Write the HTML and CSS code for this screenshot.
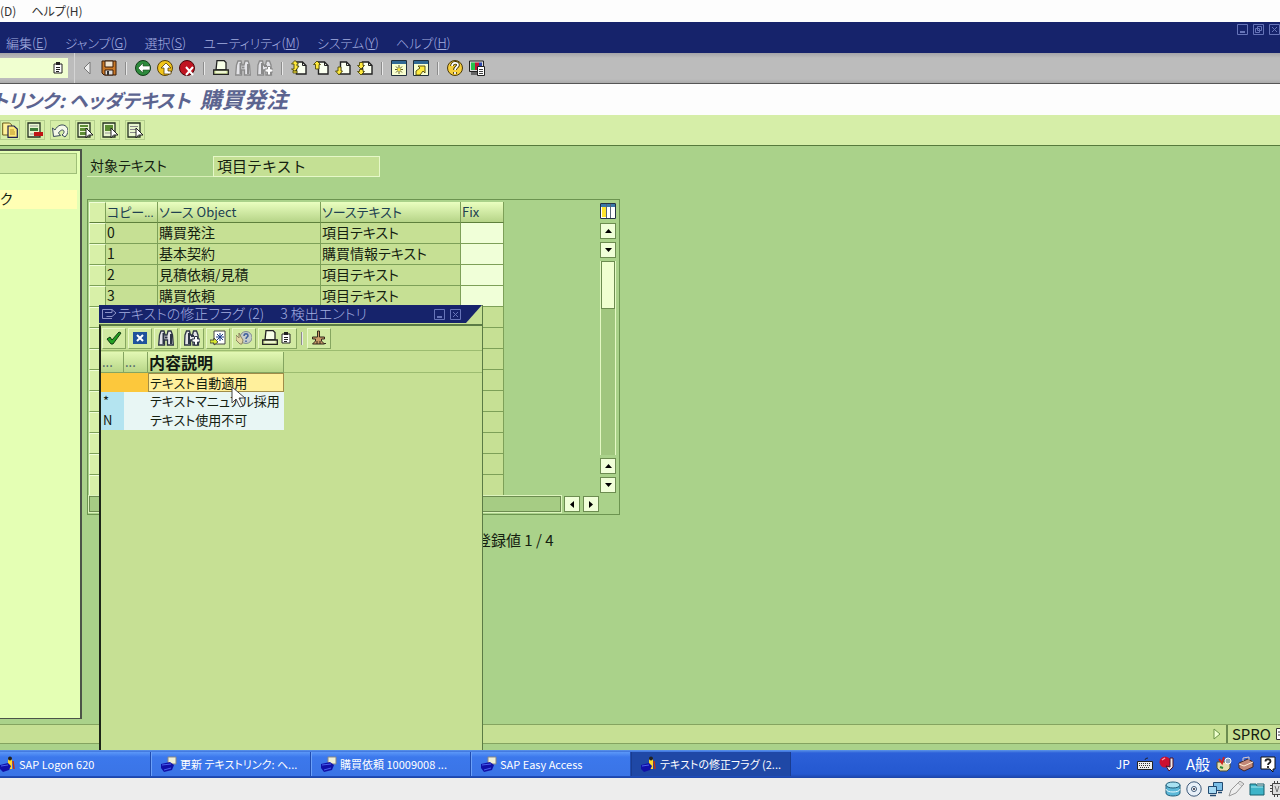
FILE: index.html
```html
<!DOCTYPE html>
<html lang="ja">
<head>
<meta charset="utf-8">
<title>テキストリンク: ヘッダテキスト 購買発注</title>
<link rel="stylesheet" href="styles.css">
</head>
<body>
<svg class="defs" width="0" height="0" aria-hidden="true">
  <symbol id="i-list" viewBox="0 0 16 16"><path d="M4 4h8v9H4z" fill="#fff" stroke="#222"/><path d="M6 2h4v3H6z" fill="#222"/><path d="M6 7.500h4M6 9.500h4M6 11.500h3" stroke="#222"/></symbol>
  <symbol id="i-tri" viewBox="0 0 8 16"><path d="M7 2L1 8l6 6z" fill="#eee" stroke="#777"/></symbol>
  <symbol id="i-save" viewBox="0 0 16 16"><path d="M1 1h14v14H3l-2-2z" fill="#c87828" stroke="#3a1c08"/><path d="M4 1h8v6H4z" fill="#f0e4d0" stroke="#3a1c08"/><path d="M4 10h8v5H4z" fill="#ddd" stroke="#3a1c08"/><path d="M6 11h2v4H6z" fill="#333"/></symbol>
  <symbol id="i-back" viewBox="0 0 16 16"><circle cx="8" cy="8" r="7.500" fill="#2d8a3c" stroke="#123d18"/><path d="M3 8l5-5v3h7v4H8v3z" fill="#fff" stroke="#1c4a20" stroke-width=".6"/></symbol>
  <symbol id="i-exit" viewBox="0 0 16 16"><circle cx="8" cy="8" r="7.500" fill="#f2c51a" stroke="#5a4308"/><path d="M9 3l5 5h-3v3h3v3H7V8H4z" fill="#fff" stroke="#5a4308" stroke-width=".8"/></symbol>
  <symbol id="i-cancel" viewBox="0 0 16 16"><circle cx="8" cy="8" r="7.500" fill="#c01420" stroke="#4a060a"/><path d="M7 7l7 8M14 7l-7 8" stroke="#fff" stroke-width="2"/></symbol>
  <symbol id="i-print" viewBox="0 0 16 16"><path d="M4 .500h7l2 2V10H3z" fill="#f8ffe8" stroke="#222" stroke-width="1.300"/><path d="M.7 10h14.600v4.300H.700z" fill="#dceca8" stroke="#222" stroke-width="1.300"/><path d="M3 12h10" stroke="#fff"/></symbol>
  <symbol id="i-find" viewBox="0 0 16 16"><path d="M1.500 5l1.500-4h3l1 4h2l1-4h3l1.500 4 .8 10H9.500v-5h-3v5H.700z" fill="#e4e4e8" stroke="currentColor" stroke-width="1.300"/><path d="M5.500 3v11M13 4v10M7 7.500h2.500" stroke="currentColor" stroke-width="2"/></symbol>
  <symbol id="i-findnext" viewBox="0 0 16 16"><path d="M1 5l1.500-4h3l1 4h2l1-4h3L14 5l.5 10H9v-5H6.500v5H.500z" fill="#e4e4e8" stroke="currentColor" stroke-width="1.300"/><path d="M5 3v11M7 6h3" stroke="currentColor" stroke-width="2"/><path d="M8 9h2.500V6.500h3V9H16v3h-2.500v3h-3v-3H8z" fill="#fff" stroke="currentColor"/></symbol>
  <symbol id="i-page" viewBox="0 0 16 16"><path d="M5.500 2h6l3.500 3.500V14H5.500z" fill="#fafff0" stroke="#222" stroke-width="1.400"/><path d="M11.500 2v3.500H15" fill="none" stroke="#222"/></symbol>
  <symbol id="i-first" viewBox="0 0 16 16"><use href="#i-page"/><path d="M.5 4L4 .500 7.500 4H6v2h2l-4 5.500L.500 9H3V4z" fill="#ffe93c" stroke="#4d4708" stroke-width=".9"/><path d="M2 11h4v2H2z" fill="#ffe93c" stroke="#4d4708" stroke-width=".8"/></symbol>
  <symbol id="i-prev" viewBox="0 0 16 16"><use href="#i-page"/><path d="M.5 4.500L4 1l3.500 3.500H6V9H2.500V4.500z" fill="#ffe93c" stroke="#4d4708" stroke-width=".9"/></symbol>
  <symbol id="i-next" viewBox="0 0 16 16"><use href="#i-page"/><path d="M3 7h3v4h1.500L4 15 .500 11H3z" fill="#ffe93c" stroke="#4d4708" stroke-width=".9"/></symbol>
  <symbol id="i-last" viewBox="0 0 16 16"><use href="#i-page"/><path d="M2.500 2.500H6v3h1.500L4 9 .500 5.500h2zM2.500 9.500H6v2h1.500L4 15 .500 11.500h2z" fill="#ffe93c" stroke="#4d4708" stroke-width=".9"/></symbol>
  <symbol id="i-session" viewBox="0 0 16 16"><path d="M.5.500h15v15H.500z" fill="#f8ffd0" stroke="#20303c"/><path d="M1 1h14v3H1z" fill="#316a94"/><path d="M8 5v9M4 9.500h8M5 6.500l6 6M11 6.500l-6 6" stroke="#4c4c10" stroke-width=".9"/><circle cx="8" cy="9.500" r="1.500" fill="#ffec40"/></symbol>
  <symbol id="i-shortcut" viewBox="0 0 16 16"><path d="M.5.500h15v15H.500z" fill="#f8ffd0" stroke="#20303c"/><path d="M1 1h14v3H1z" fill="#316a94"/><path d="M3 15v-4l4-3-2-2h7v7l-2-2-3 4z" fill="#ffec40" stroke="#4d4708" stroke-width=".9"/></symbol>
  <symbol id="i-help" viewBox="0 0 16 16"><circle cx="8" cy="8" r="7.500" fill="#f7cf3c" stroke="#4a3808"/><path d="M5 6c0-4 6-4 6-1 0 2-3 2-3 5M8 12v2" fill="none" stroke="#3b2c00" stroke-width="3.500"/><path d="M5 6c0-4 6-4 6-1 0 2-3 2-3 5M8 12v2" fill="none" stroke="#fff" stroke-width="1.800"/></symbol>
  <symbol id="i-layout" viewBox="0 0 16 16"><path d="M.5 1h14v10.500H.500z" fill="#ddd" stroke="#222"/><path d="M2 2.500h4V10H2z" fill="#27c24a"/><path d="M6 2.500h4V10H6z" fill="#c01438"/><path d="M10 2.500h3V10h-3z" fill="#2844a8"/><path d="M2 12h6v3H2z" fill="#666"/><path d="M8.500 6.500h7v9h-7z" fill="#fff" stroke="#222"/><path d="M10 9.500h4M10 11.500h4M10 13.500h4" stroke="#444"/></symbol>
  <symbol id="i-copy" viewBox="0 0 16 16"><path d="M.7 1h7l2 2v10h-9z" fill="#fff29a" stroke="#685818"/><path d="M6 4h6l3.300 3v8.300H6z" fill="#ffe978" stroke="#202050" stroke-width="1.200"/><path d="M8 8h4M8 10h5M8 12h5" stroke="#b89328"/></symbol>
  <symbol id="i-sheet" viewBox="0 0 16 16"><path d="M1 1h12v14H1z" fill="#e9f6d0" stroke="#263322" stroke-width="1.300"/></symbol>
  <symbol id="i-delrow" viewBox="0 0 16 16"><use href="#i-sheet"/><path d="M3 4h8M3 12h8" stroke="#999"/><path d="M3 6h8v3H3z" fill="#3d7a38"/><path d="M7 10h9v4H7z" fill="#c01414"/></symbol>
  <symbol id="i-undo" viewBox="0 0 16 16"><path d="M.5 6l1 8.500 7-1-2-2.500c3-5 7-3 5 .500L10 13l3 2c6-6 2-13-4-12-3 .500-5 3-6 5z" fill="#f4f8e8" stroke="#3a4a5a"/></symbol>
  <symbol id="i-pointer" viewBox="0 0 16 16"><path d="M9 6v10l2.500-3H16z" fill="#fff" stroke="#222"/></symbol>
  <symbol id="i-selall" viewBox="0 0 16 16"><use href="#i-sheet"/><path d="M3 3h8v2H3zM3 6h8v3H3zM3 10h8v3H3z" fill="#5c8c34"/><use href="#i-pointer"/></symbol>
  <symbol id="i-selblock" viewBox="0 0 16 16"><use href="#i-sheet"/><path d="M3 3h8v6H3z" fill="#5c8c34"/><path d="M3 11h7" stroke="#999"/><use href="#i-pointer"/></symbol>
  <symbol id="i-desel" viewBox="0 0 16 16"><use href="#i-sheet"/><path d="M3 4.500h8M3 7.500h8M3 10.500h6" stroke="#888"/><use href="#i-pointer"/></symbol>
  <symbol id="i-min" viewBox="0 0 11 11"><path d="M.5.500h10v10H.500z" fill="none" stroke="currentColor"/><path d="M3 8h5" stroke="currentColor" stroke-width="2"/></symbol>
  <symbol id="i-max" viewBox="0 0 11 11"><path d="M.5.500h10v10H.500zM4.500 2.500h4v4h-4zM2.500 4.500h4v4h-4z" fill="none" stroke="currentColor"/></symbol>
  <symbol id="i-close" viewBox="0 0 11 11"><path d="M.5.500h10v10H.500zM3 3l5 5M8 3L3 8" fill="none" stroke="currentColor"/></symbol>
  <symbol id="i-config" viewBox="0 0 16 16"><path d="M.5.500h15v15H.500z" fill="#fff" stroke="#234"/><path d="M1 1h14v3H1z" fill="#3a78a8"/><path d="M2 4h4v10H2z" fill="#ffe42c"/><path d="M6.500 1v14M10.500 1v14" stroke="#567"/></symbol>
  <symbol id="i-up" viewBox="0 0 7 4"><path d="M0 4L3.500 0 7 4z"/></symbol>
  <symbol id="i-down" viewBox="0 0 7 4"><path d="M0 0l3.500 4L7 0z"/></symbol>
  <symbol id="i-left" viewBox="0 0 4 7"><path d="M4 0L0 3.500 4 7z"/></symbol>
  <symbol id="i-right" viewBox="0 0 4 7"><path d="M0 0l4 3.500L0 7z"/></symbol>
  <symbol id="i-dlg" viewBox="0 0 16 14"><path d="M11 2.500H1.500v9H11M4 5.500h7v-3L15 6l-4 3.500H5.500" fill="none" stroke="#8b92c6"/></symbol>
  <symbol id="i-check" viewBox="0 0 16 16"><path d="M1 9l3-2 2 3 7-8 2 1L7 14H5z" fill="#22a022" stroke="#0f3d10"/></symbol>
  <symbol id="i-x" viewBox="0 0 16 16"><path d="M1 2h14v12H1z" fill="#1f529c"/><path d="M5 5l6 6M11 5l-6 6" stroke="#fff" stroke-width="2"/></symbol>
  <symbol id="i-star" viewBox="0 0 16 16"><path d="M4 1h11v13H4z" fill="#fff" stroke="#444"/><path d="M10 3v8M6 7h8M7 4l6 6M13 4l-6 6" stroke="#1c3c88"/><path d="M0 10h4V8l4 4-4 3v-2H0z" fill="#d8e830" stroke="#333" stroke-width=".8"/></symbol>
  <symbol id="i-handhelp" viewBox="0 0 16 16"><circle cx="10" cy="7.500" r="6" fill="#c6ccca" stroke="#7f8b92"/><path d="M8 6c0-3 4-3 4 0 0 1-2 1-2 3M10 10.500V12" fill="none" stroke="#40609c" stroke-width="1.500"/><path d="M0 5l3 3V3l2 4 2 3-1 4H4L0 10z" fill="#e3d6a2" stroke="#8c8461"/></symbol>
  <symbol id="i-pin" viewBox="0 0 16 16"><path d="M6.500 1h2v6h5v2h-3v2l3 3h-12l3-3V9h-3V7h5z" fill="#c99a68" stroke="#33281c"/><path d="M6 11v3M9 11v3M13 13.500h2" stroke="#33281c"/></symbol>
  <symbol id="i-sap" viewBox="0 0 16 16"><path d="M7 1h8v7H7z" fill="#f0f0d8" stroke="#888"/><path d="M0 8l9-2 4 3-2 5-8 2-3-4z" fill="#1010a8"/><path d="M1 9l9-1M3 14l7-2" stroke="#4a60f0"/></symbol>
  <symbol id="i-logon" viewBox="0 0 16 16"><path d="M8 3h4v10H8z" fill="#ffd92c"/><circle cx="10" cy="2.500" r="2" fill="#222"/><path d="M13 5l1 8" stroke="#c03010" stroke-width="1.500"/><path d="M0 9l8-2 3 3-2 4-6 2-3-3z" fill="#1010a8"/><path d="M1 10l7-1" stroke="#4a60f0"/></symbol>
</svg>

<div class="screen">
  <nav class="host-menu" aria-label="ビューア">
    <a href="#">(D)</a><a href="#">ヘルプ(H)</a>
  </nav>

  <header class="sap-menu">
    <nav class="menu-items" aria-label="メニュー">
      <a href="#">編集(<u>E</u>)</a><a href="#">ジャンプ(<u>G</u>)</a><a href="#">選択(<u>S</u>)</a><a href="#">ユーティリティ(<u>M</u>)</a><a href="#">システム(<u>Y</u>)</a><a href="#">ヘルプ(<u>H</u>)</a>
    </nav>
    <div class="win-buttons">
      <button aria-label="最小化"><svg width="11" height="11"><use href="#i-min"/></svg></button>
      <button aria-label="元に戻す"><svg width="11" height="11"><use href="#i-max"/></svg></button>
      <button aria-label="閉じる"><svg width="11" height="11"><use href="#i-close"/></svg></button>
    </div>
  </header>

  <div class="std-bar">
    <div class="command"><input type="text" aria-label="コマンド"><button aria-label="履歴"><svg width="16" height="16"><use href="#i-list"/></svg></button></div>
    <button class="collapse" aria-label="隠す"><svg width="8" height="16"><use href="#i-tri"/></svg></button>
    <div class="std-icons">
      <button aria-label="保存"><svg><use href="#i-save"/></svg></button>
      <i class="sep"></i>
      <button aria-label="戻る"><svg><use href="#i-back"/></svg></button>
      <button aria-label="終了"><svg><use href="#i-exit"/></svg></button>
      <button aria-label="中止"><svg><use href="#i-cancel"/></svg></button>
      <i class="sep"></i>
      <button aria-label="印刷"><svg><use href="#i-print"/></svg></button>
      <button class="off" aria-label="検索"><svg><use href="#i-find"/></svg></button>
      <button class="off" aria-label="次を検索"><svg><use href="#i-findnext"/></svg></button>
      <i class="sep"></i>
      <button aria-label="先頭ページ"><svg><use href="#i-first"/></svg></button>
      <button aria-label="前ページ"><svg><use href="#i-prev"/></svg></button>
      <button aria-label="次ページ"><svg><use href="#i-next"/></svg></button>
      <button aria-label="最終ページ"><svg><use href="#i-last"/></svg></button>
      <i class="sep"></i>
      <button aria-label="新規セッション"><svg><use href="#i-session"/></svg></button>
      <button aria-label="ショートカット"><svg><use href="#i-shortcut"/></svg></button>
      <i class="sep"></i>
      <button aria-label="ヘルプ"><svg><use href="#i-help"/></svg></button>
      <button aria-label="レイアウト"><svg><use href="#i-layout"/></svg></button>
    </div>
  </div>

  <h1 class="title">トリンク: ヘッダテキスト <span>購買発注</span></h1>

  <div class="app-bar">
    <button aria-label="コピー"><svg><use href="#i-copy"/></svg></button>
    <button aria-label="行削除"><svg><use href="#i-delrow"/></svg></button>
    <button aria-label="取消"><svg><use href="#i-undo"/></svg></button>
    <button aria-label="全選択"><svg><use href="#i-selall"/></svg></button>
    <button aria-label="ブロック選択"><svg><use href="#i-selblock"/></svg></button>
    <button aria-label="選択解除"><svg><use href="#i-desel"/></svg></button>
  </div>

  <main class="work">
    <div class="panes">
      <aside class="tree">
        <div class="tree-head"></div>
        <div class="tree-item">ク</div>
      </aside>
      <section class="detail">
        <div class="field">
          <label for="target">対象テキスト</label>
          <input id="target" type="text" value="項目テキスト" readonly>
        </div>
        <div class="control">
          <div class="grid-area">
            <table class="grid">
              <colgroup><col class="c-sel"><col class="c-copy"><col class="c-obj"><col class="c-text"><col class="c-fix"></colgroup>
              <thead><tr><th></th><th>コピー<small>...</small></th><th>ソース Object</th><th>ソーステキスト</th><th>Fix</th></tr></thead>
              <tbody>
                <tr><td></td><td>0</td><td>購買発注</td><td>項目テキスト</td><td class="open"></td></tr>
                <tr><td></td><td>1</td><td>基本契約</td><td>購買情報テキスト</td><td class="open"></td></tr>
                <tr><td></td><td>2</td><td>見積依頼/見積</td><td>項目テキスト</td><td class="open"></td></tr>
                <tr><td></td><td>3</td><td>購買依頼</td><td>項目テキスト</td><td class="open"></td></tr>
                <tr><td></td><td></td><td></td><td></td><td></td></tr>
                <tr><td></td><td></td><td></td><td></td><td></td></tr>
                <tr><td></td><td></td><td></td><td></td><td></td></tr>
                <tr><td></td><td></td><td></td><td></td><td></td></tr>
                <tr><td></td><td></td><td></td><td></td><td></td></tr>
                <tr><td></td><td></td><td></td><td></td><td></td></tr>
                <tr><td></td><td></td><td></td><td></td><td></td></tr>
                <tr><td></td><td></td><td></td><td></td><td></td></tr>
                <tr><td></td><td></td><td></td><td></td><td></td></tr>
              </tbody>
            </table>
            <div class="hscroll">
              <div class="htrack"></div>
              <button aria-label="左"><svg width="4" height="7"><use href="#i-left"/></svg></button>
              <button aria-label="右"><svg width="4" height="7"><use href="#i-right"/></svg></button>
            </div>
          </div>
          <div class="vscroll">
            <button class="config" aria-label="表設定"><svg width="16" height="16"><use href="#i-config"/></svg></button>
            <button aria-label="先頭へ"><svg width="7" height="4"><use href="#i-up"/></svg></button>
            <button aria-label="下へ"><svg width="7" height="4"><use href="#i-down"/></svg></button>
            <div class="vtrack"><div class="thumb"></div></div>
            <button aria-label="上へ"><svg width="7" height="4"><use href="#i-up"/></svg></button>
            <button aria-label="末尾へ"><svg width="7" height="4"><use href="#i-down"/></svg></button>
          </div>
        </div>
        <p class="entries">登録値 1 / 4</p>
      </section>
    </div>

    <footer class="status">
      <svg width="8" height="12" viewBox="0 0 8 12"><path d="M1 1l6 5-6 5z" fill="#f0ffd0" stroke="#6b9448"/></svg>
      <div class="sys">SPRO<svg width="4" height="12" viewBox="0 0 4 12"><path d="M4 .500H.500v11H4" fill="#fff" stroke="#333"/><path d="M2 4h2M2 7h2" stroke="#333"/></svg></div>
    </footer>

    <section class="dialog" role="dialog" aria-labelledby="dlg-title">
      <header class="dlg-head">
        <svg width="16" height="14"><use href="#i-dlg"/></svg>
        <h2 id="dlg-title">テキストの修正フラグ (2)<span>3 検出エントリ</span></h2>
        <button aria-label="最小化"><svg width="11" height="11"><use href="#i-min"/></svg></button>
        <button aria-label="閉じる"><svg width="11" height="11"><use href="#i-close"/></svg></button>
      </header>
      <div class="dlg-body">
        <div class="dlg-bar">
          <button aria-label="選択"><svg><use href="#i-check"/></svg></button>
          <button aria-label="取消"><svg><use href="#i-x"/></svg></button>
          <button aria-label="検索"><svg><use href="#i-find"/></svg></button>
          <button aria-label="次を検索"><svg><use href="#i-findnext"/></svg></button>
          <button aria-label="複数選択"><svg><use href="#i-star"/></svg></button>
          <button aria-label="ヘルプ"><svg><use href="#i-handhelp"/></svg></button>
          <button class="wide" aria-label="印刷"><svg><use href="#i-print"/></svg><svg><use href="#i-list"/></svg></button>
          <i class="sep"></i>
          <button aria-label="固定"><svg><use href="#i-pin"/></svg></button>
        </div>
        <div class="hits-wrap">
          <table class="hits">
            <colgroup><col class="h-a"><col class="h-b"><col class="h-c"></colgroup>
            <thead><tr><th>...</th><th>...</th><th class="h-name">内容説明</th></tr></thead>
            <tbody>
              <tr class="sel"><td></td><td></td><td>テキスト自動適用</td></tr>
              <tr><td>*</td><td></td><td>テキストマニュアル採用</td></tr>
              <tr><td>N</td><td></td><td>テキスト使用不可</td></tr>
            </tbody>
          </table>
        </div>
      </div>
      <svg class="cursor" width="16" height="23" viewBox="0 0 16 23"><path d="M1 1v16l4-4 4 8 3-1-4-8h6z" fill="#fff" stroke="#444"/></svg>
    </section>
  </main>

  <nav class="taskbar" aria-label="タスクバー">
    <button class="task first"><svg><use href="#i-logon"/></svg><span>SAP Logon 620</span></button>
    <button class="task"><svg><use href="#i-sap"/></svg><span>更新 テキストリンク: ヘ...</span></button>
    <button class="task"><svg><use href="#i-sap"/></svg><span>購買依頼 10009008 ...</span></button>
    <button class="task"><svg><use href="#i-sap"/></svg><span>SAP Easy Access</span></button>
    <button class="task active"><svg><use href="#i-logon"/></svg><span>テキストの修正フラグ (2...</span></button>
    <div class="tray">
      <span class="lang">JP</span>
      <svg viewBox="0 0 16 16"><path d="M8 4q0-2 3-2" fill="none" stroke="#223"/><path d="M.5 5.500h15v8H.500z" fill="#eee" stroke="#222"/><path d="M2 7.500h12M2 9.500h12M3 11.500h10" stroke="#333" stroke-dasharray="1 1"/></svg>
      <svg viewBox="0 0 16 16"><circle cx="6" cy="6" r="5.500" fill="#cc1030"/><path d="M3 4l3-2" stroke="#ff9aaa" stroke-width="1.500"/><path d="M10 15l-3-5 4 1V2h3v9z" fill="#f0e8e8" stroke="#501020"/></svg>
      <span class="ime">A般</span>
      <svg viewBox="0 0 16 16"><path d="M1 6h13v6l-3 3H4l-3-3z" fill="#e6dfae" stroke="#55502a"/><path d="M3 3l3 4 2-6" stroke="#c22" stroke-width="2" fill="none"/><circle cx="12" cy="5" r="3" fill="#8fa6bc" stroke="#fff"/><path d="M4 11l3 1" stroke="#2a8a3a" stroke-width="2"/></svg>
      <svg viewBox="0 0 16 16"><path d="M1 7l9-4 5 3v5l-9 4-5-3z" fill="#c28878" stroke="#402828"/><path d="M1 8l5 2 9-4" fill="none" stroke="#fff0d8"/><path d="M5 5V2l6-1v3" fill="none" stroke="#dcc"/></svg>
      <svg viewBox="0 0 16 16"><path d="M1 1h14v12h-2v3l-3-3H1z" fill="#fff" stroke="#111"/><path d="M5.500 5.500c0-3 5-3 5 0 0 1.500-2.500 1.500-2.500 3.500M8 10v2" fill="none" stroke="#222" stroke-width="1.800"/></svg>
    </div>
  </nav>

  <footer class="host-status">
    <svg viewBox="0 0 16 16"><path d="M1 4v8c0 4 14 4 14 0V4" fill="#5cb8d8" stroke="#23607c"/><ellipse cx="8" cy="4" rx="7" ry="3" fill="#a8e2f2" stroke="#23607c"/><path d="M1 8c0 4 14 4 14 0" fill="none" stroke="#e8faff"/></svg>
    <svg viewBox="0 0 16 16"><circle cx="8" cy="8" r="7.200" fill="#e8f0f8" stroke="#3c5878"/><circle cx="8" cy="8" r="2.500" fill="#fff" stroke="#3c5878"/><circle cx="8" cy="8" r="1" fill="#223"/></svg>
    <svg viewBox="0 0 16 16"><path d="M6.500 1.500h9v8h-9z" fill="#7cc0e8" stroke="#224a70"/><path d="M1.500 5.500h8v7h-8z" fill="#a8daf4" stroke="#224a70"/><path d="M3 14.500h6M11 11.500h4" stroke="#224a70" stroke-width="1.500"/></svg>
    <svg viewBox="0 0 16 16"><path d="M1 15l2-6 7-7 4 3-6 7z" fill="#eee" stroke="#999"/><path d="M10 2l2-2 4 3-2 2" fill="#ddd" stroke="#999"/></svg>
    <svg viewBox="0 0 16 16"><path d="M1 3h6l1 2h7v9H1z" fill="#3eb4c8" stroke="#16606e"/><path d="M8 3h7v2" fill="none" stroke="#16606e"/><path d="M2 6h12" stroke="#a8eaf2"/></svg>
    <svg class="chip" viewBox="0 0 10 16"><path d="M10 2.500H2.500v11H10" fill="#ddd" stroke="#444"/><path d="M0 4.500h2M0 7.500h2M0 10.500h2M4.500 0v2M7.500 0v2M4.500 14v2M7.500 14v2" stroke="#444"/><path d="M5 5l2 6 2-6" fill="none" stroke="#777"/></svg>
  </footer>
</div>
</body>
</html>
```
FILE: styles.css
```css
* { box-sizing: border-box; }

body {
  margin: 0;
  font-family: "Noto Sans CJK JP", sans-serif;
  font-size: 13px;
  line-height: 16px;
  font-feature-settings: "palt";
  font-weight: 400;
  color: #142010;
  overflow: hidden;
}

button {
  font: inherit;
  color: inherit;
  background: none;
  border: 0;
  padding: 0;
  display: flex;
  align-items: center;
  justify-content: center;
}

svg { display: block; flex: none; }
a { color: inherit; text-decoration: none; }
.defs { position: absolute; }

.screen { display: flex; flex-direction: column; height: 100vh; }

.host-menu {
  display: flex;
  gap: 15px;
  height: 22px;
  align-items: center;
  background: #fdfdfd;
  color: #333;
  font-size: 12px;
}

.sap-menu {
  display: flex;
  justify-content: space-between;
  height: 31px;
  background: #16236b;
  color: #a4aee0;
  font-size: 13px;
  font-weight: 300;
  overflow: hidden;
}
.menu-items { display: flex; gap: 17px; padding: 13px 0 0 6px; }
.win-buttons { display: flex; gap: 5px; padding-top: 2px; align-items: flex-start; color: #6674b8; }

.std-bar {
  display: flex;
  align-items: center;
  height: 31px;
  background: linear-gradient(#a4a4a8, #bcbcbc 5px, #bcbcbc 26px, #aaa);
  border-bottom: 1px solid #555;
}
.command {
  display: flex;
  align-items: center;
  width: 68px;
  height: 20px;
  background: #f0ffd0;
}
.command input { flex: 1; min-width: 0; height: 18px; border: 0; background: none; padding: 0 2px; }
.command button { width: 20px; }
.collapse { align-self: stretch; margin-left: 6px; padding: 0 8px; border-left: 1px solid #d4d4d4; }
.std-icons { display: flex; align-items: center; gap: 6px; padding-left: 2px; color: #16181c; }
.std-icons svg, .app-bar svg, .dlg-bar svg, .task svg, .tray svg, .host-status svg { width: 16px; height: 16px; }
.std-icons .off { color: #8a8a8a; }
.sep { width: 2px; height: 13px; margin: 0 2px; background: linear-gradient(90deg, #8c8c8c 50%, #e8e8e8 50%); }

.title {
  margin: 0;
  height: 31px;
  line-height: 29px;
  background: #fdfdfd;
  color: #5c6490;
  font-size: 19px;
  font-weight: 700;
  font-style: italic;
  text-indent: -8px;
  white-space: nowrap;
}
.title span { font-size: 22px; margin-left: 5px; }

.app-bar {
  display: flex;
  align-items: center;
  gap: 5px;
  height: 31px;
  background: #d6eea8;
  border-bottom: 1px solid #567a3c;
}
.app-bar button { width: 20px; height: 20px; border: 1px solid #b4cf8c; }

.work {
  position: relative;
  flex: 1;
  min-height: 0;
  display: flex;
  flex-direction: column;
  background: #aad28a;
}
.panes { display: flex; flex: 1; min-height: 0; gap: 5px; }

.tree {
  width: 82px;
  margin: 3px 0 5px;
  background: #e4ffb4;
  border: solid #4c5448;
  border-width: 2px 2px 1px 0;
  padding: 2px 3px 0 0;
}
.tree-head { height: 21px; background: #d2eca4; border: 1px solid #9fbf78; border-left: 0; margin-bottom: 16px; }
.tree-item { height: 19px; line-height: 17px; background: #ffffb4; font-size: 14px; }

.detail { display: flex; flex-direction: column; align-items: flex-start; padding-top: 10px; }
.field { display: flex; align-items: flex-end; font-size: 14px; }
.field label { width: 126px; height: 21px; line-height: 19px; padding-left: 3px; border-bottom: 1px solid #d8efb8; }
.field input {
  width: 167px;
  height: 21px;
  padding: 0 3px 2px;
  border: 1px solid #e6f8c8;
  background: #c4e094;
  color: inherit;
  font: 400 15px/17px "Noto Sans CJK JP", sans-serif;
  font-feature-settings: normal;
}

.control {
  display: flex;
  margin-top: 22px;
  padding: 2px 2px 2px 1px;
  border: 1px solid #6c9450;
}
.grid-area { width: 510px; display: flex; flex-direction: column; justify-content: space-between; }
.grid { border-collapse: separate; border-spacing: 0; table-layout: fixed; width: 415px; font-size: 14px; }
.c-sel { width: 17px; }
.c-copy { width: 52px; }
.c-obj { width: 163px; }
.c-text { width: 140px; }
.c-fix { width: 43px; }
.grid th, .grid td {
  height: 21px;
  padding: 0 1px 2px;
  line-height: 18px;
  text-align: left;
  font-weight: 400;
  white-space: nowrap;
  border-right: 1px solid #7da058;
  border-bottom: 1px solid #7da058;
  background: #c6e094;
}
.grid th { padding-bottom: 0; font-size: 13px; color: #204050; background: linear-gradient(#eaffc0, #b6d488); border-bottom-color: #5e803c; }
.grid th small { font-size: 11px; }
.grid td:first-child, .grid th:first-child { background: #d8f0a8; border-left: 1px solid #f0ffd8; border-top: 1px solid #f0ffd8; }
.grid td.open { background: #f0ffd8; }

.hscroll { display: flex; gap: 3px; height: 16px; }
.hscroll button, .vscroll button { width: 16px; height: 16px; background: #f0ffd8; border: 1px solid #6c8c50; }
.htrack { flex: 1; background: #a6cc84; border: 1px solid #6c8c50; box-shadow: 0 0 0 1px #dcf4bc; }
.vscroll { display: flex; flex-direction: column; gap: 3px; width: 18px; align-items: center; padding: 1px 0 19px; }
.vscroll .config { border: 0; margin-bottom: 1px; }
.vtrack { flex: 1; width: 16px; border: 1px solid #e4f8c4; border-width: 0 1px; background: #a0c67e; }
.thumb { height: 48px; background: #f0ffd0; border: 1px solid #6c8c50; }
.entries { margin: 17px 0 0 389px; font-size: 15px; white-space: nowrap; }

.status {
  display: flex;
  align-items: center;
  justify-content: flex-end;
  gap: 5px;
  height: 20px;
  margin-bottom: 6px;
  background: #c6e094;
  border: solid #84a460;
  border-width: 1px 0;
}
.sys { display: flex; align-items: center; gap: 5px; height: 18px; padding-left: 4px; border-left: 2px solid #6c8c50; font-size: 15px; }

.dialog {
  position: absolute;
  left: 99px;
  top: 159px;
  bottom: 0;
  width: 384px;
  display: flex;
  flex-direction: column;
  background: #c6e094;
  border-right: 1px solid #5b7b45;
  color: #142010;
}
.dlg-head {
  display: flex;
  align-items: center;
  gap: 5px;
  height: 18px;
  padding: 0 21px 0 2px;
  background: #16236b;
  color: #a4aee0;
  clip-path: polygon(0 0, 100% 0, calc(100% - 16px) 100%, 0 100%);
}
.dlg-head h2 { flex: 1; margin: 0 0 0 -4px; font-size: 14px; font-weight: 300; line-height: 18px; padding-bottom: 2px; white-space: nowrap; }
.dlg-head h2 span { margin-left: 16px; }
.dlg-head button { color: #6674b8; }
.dlg-body { flex: 1; margin-top: 1px; border-left: 2px solid #1c2418; border-top: 2px solid #5b7b45; }
.dlg-bar { display: flex; align-items: center; gap: 2px; height: 25px; padding-left: 1px; border-bottom: 1px solid #9cbc70; color: #2c3444; }
.dlg-bar button { width: 24px; height: 21px; border: 1px solid; border-color: #e8f8c8 #86a660 #86a660 #e8f8c8; background: #d2eaa2; }
.dlg-bar .wide { width: 39px; }
.hits-wrap { padding-top: 1px; background: linear-gradient(#9cbc70, #9cbc70) 0 21px / 100% 1px no-repeat; }
.hits { border-collapse: separate; border-spacing: 0; table-layout: fixed; width: 183px; font-size: 13px; }
.h-a { width: 23px; }
.h-b { width: 24px; }
.h-c { width: 136px; }
.hits th { height: 21px; padding: 0 1px; text-align: left; font-weight: 400; color: #456; line-height: 18px; background: linear-gradient(#e2f8b4, #b8d688); border-right: 1px solid #84a460; border-bottom: 1px solid #84a460; }
.hits .h-name { font-size: 16px; font-weight: 700; color: #101810; }
.hits td { height: 19px; padding: 0 2px 2px; line-height: 17px; white-space: nowrap; background: #e8f6f4; }
.hits td:first-child { background: #b4e4f0; }
.hits .sel td { background: #fff09c; }
.hits .sel td:nth-child(-n+2) { background: #fcc83c; }
.hits .sel td:last-child { border: 1px solid #a08c48; padding: 0 1px; line-height: 15px; }
.cursor { position: absolute; left: 132px; top: 81px; }

.taskbar {
  display: flex;
  align-items: stretch;
  height: 28px;
  padding: 2px 0;
  background: linear-gradient(#5c94e8, #2c60d8 3px, #2458d0 24px, #1c44a8);
  color: #fff;
  font-size: 12px;
}
.task {
  width: 160px;
  gap: 3px;
  padding-left: 9px;
  justify-content: flex-start;
  font-size: 11px;
  background: linear-gradient(#5c98f8, #3c78ec 5px, #3a74e6);
  border-right: 1px solid #1f4cb0;
  border-left: 1px solid #6ca0f8;
  white-space: nowrap;
}
.task.first { width: 151px; padding-left: 0; border-left: 0; }
.task.active { background: #1f48a6; border-color: #1a3c90; }
.tray { display: flex; align-items: center; gap: 6px; margin-left: auto; padding-right: 4px; }
.lang { margin-right: 1px; }
.ime { font-size: 15px; margin-left: 5px; }

.host-status { display: flex; justify-content: flex-end; align-items: center; gap: 5px; height: 22px; background: #ededed; }
.host-status .chip { width: 10px; }
```
